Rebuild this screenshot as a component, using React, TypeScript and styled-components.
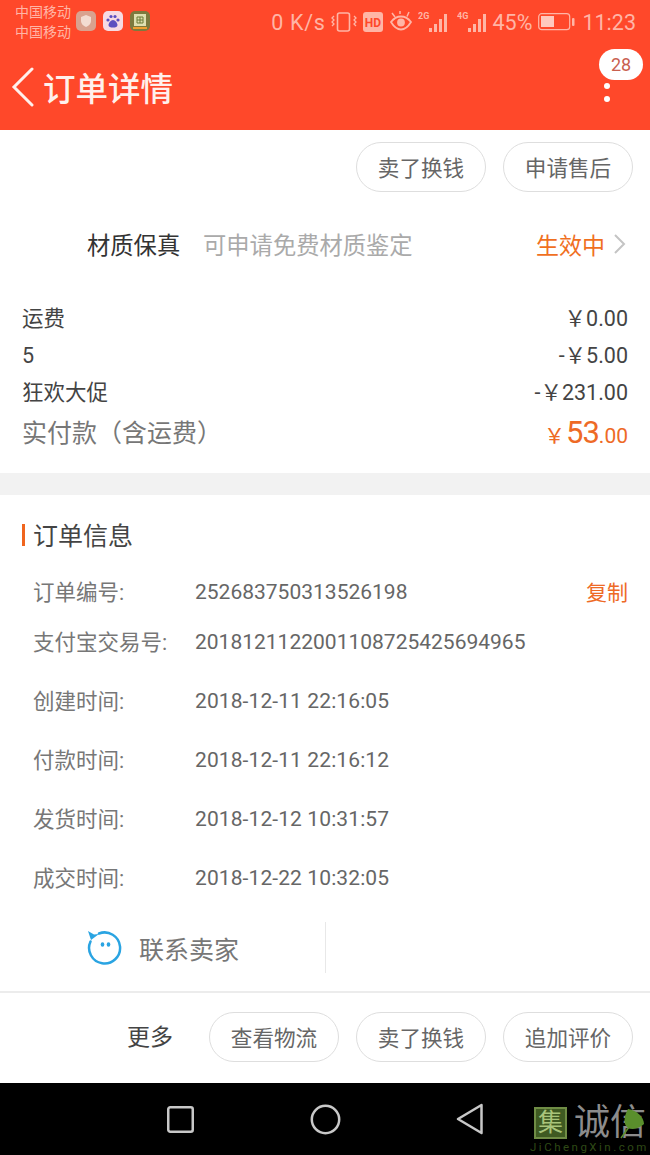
import React from "react";
import styled, { createGlobalStyle } from "styled-components";

const Global = createGlobalStyle`
  html, body { margin: 0; padding: 0; background: #fff; }
  body { font-family: Roboto, "Noto Sans CJK SC", sans-serif; }
  * { box-sizing: border-box; }
`;

const Page = styled.div`
  position: relative;
  width: 650px;
  height: 1155px;
  overflow: hidden;
  display: flex;
  flex-direction: column;
`;

const Top = styled.div`
  background: #ff482a;
  height: 130px;
  flex: none;
`;

const StatusBar = styled.div`
  height: 44px;
  padding: 0 14px 0 15px;
  display: flex;
  align-items: center;
  color: #ffb5a6;
`;

const Carriers = styled.div`
  width: 61px;
  font-size: 14px;
  line-height: 20px;
  white-space: nowrap;
`;

const AppIcons = styled.div`
  display: flex;
  gap: 7px;
  margin-top: -2px;
`;

const AppIcon = styled.div<{ $bg: string }>`
  width: 20px;
  height: 20px;
  border-radius: 5px;
  background: ${(p) => p.$bg};
  display: flex;
  align-items: center;
  justify-content: center;
`;

const StatusRight = styled.div`
  margin-left: auto;
  display: flex;
  align-items: center;
  font-size: 21.5px;
  color: #ffb5a6;
  white-space: nowrap;
`;

const StatusText = styled.span<{ $ml?: number }>`
  margin-left: ${(p) => p.$ml ?? 0}px;
`;

const SpeedText = styled.span`
  letter-spacing: 0.7px;
`;

const StatusGlyph = styled.svg<{ $ml?: number }>`
  display: block;
  margin-left: ${(p) => p.$ml ?? 0}px;
  flex: none;
`;

const HeaderBar = styled.div`
  height: 86px;
  padding-left: 11px;
  display: flex;
  align-items: center;
  position: relative;
`;

const HeaderTitle = styled.div`
  color: #fff0ec;
  font-size: 32.5px;
  font-weight: 500;
  margin-left: 9px;
  margin-top: -2px;
`;

const CountBadge = styled.div`
  position: absolute;
  right: 7px;
  top: 5px;
  width: 44px;
  height: 31px;
  border-radius: 16px;
  background: #fff;
  color: #c9604f;
  font-size: 18px;
  display: flex;
  align-items: center;
  justify-content: center;
`;

const MoreDots = styled.div`
  position: absolute;
  right: 40px;
  top: 39px;
  display: flex;
  flex-direction: column;
  gap: 7px;
`;

const Dot = styled.span`
  width: 6px;
  height: 6px;
  border-radius: 50%;
  background: #fff;
`;

const ButtonRow = styled.div`
  height: 76px;
  padding: 12px 17px 0 0;
  display: flex;
  justify-content: flex-end;
  gap: 17px;
  flex: none;
`;

const PillButton = styled.div`
  width: 130px;
  height: 50px;
  border: 1.5px solid #dedede;
  border-radius: 25px;
  color: #666;
  font-size: 21.6px;
  padding-bottom: 1px;
  display: flex;
  align-items: center;
  justify-content: center;
`;

const GuaranteeRow = styled.div`
  height: 80px;
  padding: 0 24px 4px 87px;
  display: flex;
  align-items: center;
  font-size: 23.3px;
  flex: none;
`;

const GuaranteeName = styled.span`
  color: #333;
  width: 116px;
`;

const GuaranteeHint = styled.span`
  color: #aaa;
  flex: 1;
`;

const GuaranteeState = styled.span`
  color: #f0701f;
  font-size: 23px;
`;

const Chevron = styled.svg`
  display: block;
  margin-left: 8px;
`;

const Fees = styled.div`
  padding: 12px 22px 0 22px;
  height: 187px;
  flex: none;
`;

const FeeRow = styled.div`
  height: 37px;
  display: flex;
  justify-content: space-between;
  align-items: center;
  font-size: 21.5px;
  color: #444;
`;

const FeeNumberLabel = styled.span`
  margin-top: 4px;
`;

const TotalRow = styled.div`
  height: 43px;
  display: flex;
  justify-content: space-between;
  align-items: center;
  font-size: 25px;
  color: #777;
`;

const TotalValue = styled.span`
  color: #ee6a26;
  font-size: 21px;
  display: flex;
  align-items: baseline;
  margin-top: 3px;
`;

const TotalBig = styled.span`
  font-size: 31px;
  letter-spacing: -1px;
  margin-left: 1px;
`;

const Gap = styled.div`
  height: 22px;
  background: #f2f2f2;
  flex: none;
`;

const SectionTitle = styled.div`
  height: 76px;
  padding: 4px 0 0 22px;
  display: flex;
  align-items: center;
  flex: none;
`;

const SectionMark = styled.span`
  width: 3px;
  height: 22px;
  background: #f0651e;
  margin-right: 8px;
`;

const SectionText = styled.span`
  font-size: 25px;
  color: #444;
  margin-top: -3px;
`;

const InfoList = styled.div`
  padding: 0 22px 0 33px;
  flex: none;
`;

const InfoRow = styled.div<{ $h: number }>`
  height: ${(p) => p.$h}px;
  display: flex;
  align-items: center;
  font-size: 21px;
  color: #666;
`;

const InfoLabel = styled.span`
  width: 162px;
  font-size: 21.5px;
  color: #777;
  flex: none;
  margin-top: -2px;
`;

const DateValue = styled.span`
  letter-spacing: 0.1px;
`;

const CopyLink = styled.span`
  margin-left: auto;
  color: #ee6a26;
  margin-top: -2px;
`;

const ContactRow = styled.div`
  height: 51px;
  margin-top: 15px;
  display: flex;
  flex: none;
`;

const ContactCell = styled.div`
  width: 326px;
  padding-left: 87px;
  display: flex;
  align-items: center;
  border-right: 1px solid #e8e8e8;
`;

const ContactText = styled.span`
  margin-left: 17px;
  font-size: 25px;
  color: #777;
`;

const BottomBar = styled.div`
  margin-top: 18px;
  border-top: 2px solid #ececec;
  height: 92px;
  padding: 19px 17px 0 0;
  display: flex;
  justify-content: flex-end;
  gap: 17px;
  flex: none;
`;

const MoreLabel = styled.span`
  font-size: 23px;
  color: #444;
  height: 50px;
  line-height: 50px;
  margin: 1px 19px 0 0;
`;

const NavBar = styled.div`
  flex: 1;
  background: #000;
  display: flex;
  align-items: center;
  padding-left: 166px;
`;

const NavIcon = styled.svg<{ $ml?: number }>`
  display: block;
  margin-left: ${(p) => p.$ml ?? 0}px;
`;

const Watermark = styled.div`
  position: absolute;
  left: 530px;
  top: 1105px;
  width: 120px;
`;

const WatermarkTop = styled.div`
  display: flex;
  align-items: flex-start;
  padding-left: 4px;
`;

const WatermarkSeal = styled.div`
  width: 33px;
  height: 32px;
  margin-top: 2px;
  background: #3f5a22;
  border: 2px solid #6f8c45;
  color: #a9c47a;
  font-size: 25px;
  line-height: 27px;
  text-align: center;
  flex: none;
`;

const WatermarkName = styled.div`
  color: #8c8c8c;
  font-size: 36px;
  line-height: 36px;
  margin-left: 7px;
  white-space: nowrap;
`;

const WatermarkUrl = styled.div`
  color: #2f4a16;
  font-size: 11.5px;
  line-height: 13px;
  letter-spacing: 2.5px;
  white-space: nowrap;
`;

const Leaf = styled.svg`
  position: absolute;
  left: 90px;
  top: 2px;
`;

function Signal({ label, ml }: { label: string; ml: number }) {
  return (
    <StatusGlyph $ml={ml} width="33" height="22" viewBox="0 0 33 22">
      <text x="0" y="8" fontSize="9" fontWeight="700" fill="#ffb5a6" fontFamily="Roboto">
        {label}
      </text>
      <g fill="#ffb5a6">
        <rect x="11" y="17" width="3" height="4" />
        <rect x="16" y="13" width="3" height="8" />
        <rect x="21" y="8" width="3" height="13" />
        <rect x="26" y="3" width="3" height="18" />
      </g>
    </StatusGlyph>
  );
}

const infoTimes = [
  ["创建时间:", "2018-12-11 22:16:05"],
  ["付款时间:", "2018-12-11 22:16:12"],
  ["发货时间:", "2018-12-12 10:31:57"],
  ["成交时间:", "2018-12-22 10:32:05"],
];

export default function App() {
  return (
    <Page>
      <Global />
      <Top>
        <StatusBar>
          <Carriers>
            中国移动
            <br />
            中国移动
          </Carriers>
          <AppIcons>
            <AppIcon $bg="#d9a28f">
              <svg width="14" height="14" viewBox="0 0 14 14">
                <path d="M7 1l5 2v4c0 3-2.400 5-5 6-2.600-1-5-3-5-6V3z" fill="#f3dcd2" />
              </svg>
            </AppIcon>
            <AppIcon $bg="#f6dbe3">
              <svg width="16" height="16" viewBox="0 0 16 16" fill="#5b4fc0">
                <circle cx="3" cy="7" r="1.600" />
                <circle cx="6" cy="3.500" r="1.600" />
                <circle cx="10" cy="3.500" r="1.600" />
                <circle cx="13" cy="7" r="1.600" />
                <path d="M8 7c2 0 4.500 3 4.500 5s-2 2.500-4.500 2.500S3.500 14 3.500 12 6 7 8 7z" />
              </svg>
            </AppIcon>
            <AppIcon $bg="#7d7a3e">
              <svg width="14" height="16" viewBox="0 0 14 16">
                <rect x="1" y="1" width="12" height="12" fill="#dfe0b0" />
                <path d="M4 4h6v6H4zM4 7h6M7 4v6" stroke="#6b7a36" fill="none" />
                <rect x="0" y="14" width="14" height="2" fill="#f0a030" />
              </svg>
            </AppIcon>
          </AppIcons>
          <StatusRight>
            <SpeedText>0 K/s</SpeedText>
            <StatusGlyph $ml={5} width="26" height="22" viewBox="0 0 26 22" fill="none" stroke="#ffb5a6" strokeWidth="1.600">
              <rect x="6.500" y="2" width="12" height="18" rx="2" />
              <path d="M3 5l-2 2 2 2-2 2 2 2-2 2M23 5l2 2-2 2 2 2-2 2 2 2" strokeWidth="1.300" />
            </StatusGlyph>
            <StatusGlyph $ml={6} width="20" height="20" viewBox="0 0 20 20">
              <rect width="20" height="20" rx="3" fill="#ffb5a6" />
              <text x="10" y="14.500" textAnchor="middle" fontSize="12" fontWeight="700" fill="#ff482a" fontFamily="Roboto">
                HD
              </text>
            </StatusGlyph>
            <StatusGlyph $ml={6} width="24" height="22" viewBox="0 0 24 22" fill="none" stroke="#ffb5a6" strokeWidth="1.800">
              <path d="M2 11c3-4 6-5.500 10-5.500S19 7 22 11c-3 5-6 7.500-10 7.500S5 16 2 11z" />
              <circle cx="12" cy="11.500" r="3" fill="#ffb5a6" />
              <path d="M3 2l3 4M20 1l-2 4.500M11 0v3" strokeWidth="1.500" />
            </StatusGlyph>
            <Signal label="2G" ml={5} />
            <Signal label="4G" ml={6} />
            <StatusText $ml={3}>45%</StatusText>
            <StatusGlyph $ml={6} width="37" height="18" viewBox="0 0 37 18">
              <rect x="0.700" y="0.700" width="31" height="16" rx="3" fill="none" stroke="#ffb5a6" strokeWidth="1.200" />
              <rect x="3" y="3" width="13" height="11" fill="#ffc9be" />
              <rect x="34" y="5" width="2.500" height="8" rx="1" fill="#ffb5a6" />
            </StatusGlyph>
            <StatusText $ml={7}>11:23</StatusText>
          </StatusRight>
        </StatusBar>
        <HeaderBar>
          <svg width="23" height="40" viewBox="0 0 23 40" fill="none" stroke="#fff0ec" strokeWidth="3" strokeLinecap="round">
            <path d="M21 2 3 20l18 18" />
          </svg>
          <HeaderTitle>订单详情</HeaderTitle>
          <CountBadge>28</CountBadge>
          <MoreDots>
            <Dot />
            <Dot />
          </MoreDots>
        </HeaderBar>
      </Top>

      <ButtonRow>
        <PillButton>卖了换钱</PillButton>
        <PillButton>申请售后</PillButton>
      </ButtonRow>

      <GuaranteeRow>
        <GuaranteeName>材质保真</GuaranteeName>
        <GuaranteeHint>可申请免费材质鉴定</GuaranteeHint>
        <GuaranteeState>生效中</GuaranteeState>
        <Chevron width="13" height="22" viewBox="0 0 13 22" fill="none" stroke="#c4c4c4" strokeWidth="2">
          <path d="M2 2l9 9-9 9" />
        </Chevron>
      </GuaranteeRow>

      <Fees>
        <FeeRow>
          <span>运费</span>
          <span>￥0.00</span>
        </FeeRow>
        <FeeRow>
          <FeeNumberLabel>5</FeeNumberLabel>
          <span>-￥5.00</span>
        </FeeRow>
        <FeeRow>
          <span>狂欢大促</span>
          <span>-￥231.00</span>
        </FeeRow>
        <TotalRow>
          <span>实付款（含运费）</span>
          <TotalValue>
            ￥<TotalBig>53</TotalBig>.00
          </TotalValue>
        </TotalRow>
      </Fees>

      <Gap />

      <SectionTitle>
        <SectionMark />
        <SectionText>订单信息</SectionText>
      </SectionTitle>

      <InfoList>
        <InfoRow $h={41}>
          <InfoLabel>订单编号:</InfoLabel>
          <span>252683750313526198</span>
          <CopyLink>复制</CopyLink>
        </InfoRow>
        <InfoRow $h={59}>
          <InfoLabel>支付宝交易号:</InfoLabel>
          <span>2018121122001108725425694965</span>
        </InfoRow>
        {infoTimes.map(([label, value]) => (
          <InfoRow $h={59} key={label}>
            <InfoLabel>{label}</InfoLabel>
            <DateValue>{value}</DateValue>
          </InfoRow>
        ))}
      </InfoList>

      <ContactRow>
        <ContactCell>
          <svg width="35" height="35" viewBox="0 0 35 35" fill="none">
            <path d="M12 3.500A15.500 15.500 0 1 1 3.500 11.500" stroke="#2aa4e2" strokeWidth="2.500" strokeLinecap="round" />
            <path d="M1 1l3 9 8-6-5 .5z" fill="#2aa4e2" />
            <ellipse cx="15.500" cy="14.500" rx="1.800" ry="2.300" fill="#2aa4e2" />
            <ellipse cx="21.500" cy="14.500" rx="1.800" ry="2.300" fill="#2aa4e2" />
          </svg>
          <ContactText>联系卖家</ContactText>
        </ContactCell>
      </ContactRow>

      <BottomBar>
        <MoreLabel>更多</MoreLabel>
        <PillButton>查看物流</PillButton>
        <PillButton>卖了换钱</PillButton>
        <PillButton>追加评价</PillButton>
      </BottomBar>

      <NavBar>
        <NavIcon width="29" height="29" viewBox="0 0 29 29" fill="none" stroke="#c8c8c8" strokeWidth="2.500">
          <rect x="2.250" y="2.250" width="24.500" height="24.500" rx="2" />
        </NavIcon>
        <NavIcon $ml={115} width="31" height="31" viewBox="0 0 31 31" fill="none" stroke="#c8c8c8" strokeWidth="2.500">
          <circle cx="15.500" cy="15.500" r="13.700" />
        </NavIcon>
        <NavIcon $ml={115} width="28" height="32" viewBox="0 0 28 32" fill="none" stroke="#c8c8c8" strokeWidth="2.500" strokeLinejoin="round">
          <path d="M25.500 2 2 16l23.500 14z" />
        </NavIcon>
      </NavBar>

      <Watermark>
        <WatermarkTop>
          <WatermarkSeal>集</WatermarkSeal>
          <WatermarkName>诚信</WatermarkName>
        </WatermarkTop>
        <WatermarkUrl>JiChengXin.com</WatermarkUrl>
        <Leaf width="26" height="32" viewBox="0 0 26 32">
          <path d="M8 2c8 1 16 8 16 15-5 5-14 7-18 2C3 15 5 7 8 2z" fill="#5a8f2c" />
          <path d="M1 31 12 16" stroke="#5a8f2c" strokeWidth="1.500" />
        </Leaf>
      </Watermark>
    </Page>
  );
}
